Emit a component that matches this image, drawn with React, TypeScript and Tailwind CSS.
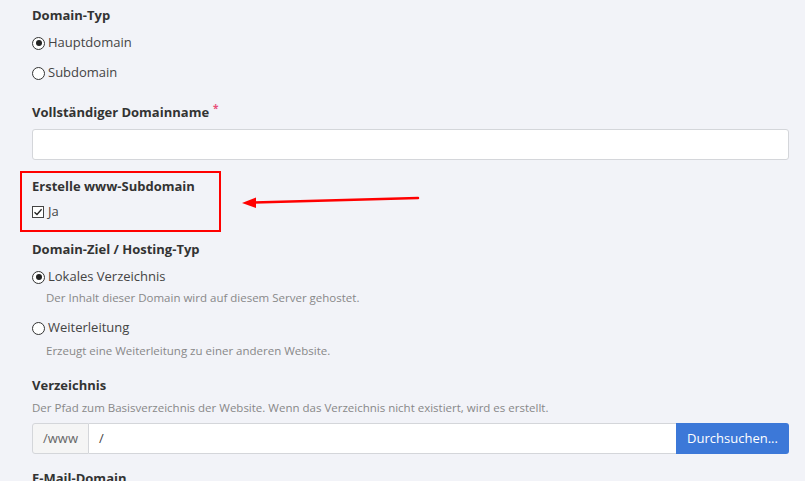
import React from 'react';

const font = { fontFamily: '"Open Sans", "Noto Sans", sans-serif' };

function Radio({ checked, label }: { checked?: boolean; label: string }) {
  return (
    <div className="flex h-[20px] items-center">
      <span className="flex h-[13px] w-[13px] items-center justify-center rounded-full border border-[#333] bg-white">
        {checked && <span className="h-[6px] w-[6px] rounded-full bg-[#222]" />}
      </span>
      <span className="ml-[3px] text-[13px] text-[#444]">{label}</span>
    </div>
  );
}

function Label({ children, className = '' }: { children: React.ReactNode; className?: string }) {
  return <div className={`text-[13px] font-bold leading-[20px] text-[#333] ${className}`}>{children}</div>;
}

function Hint({ children, className = '' }: { children: React.ReactNode; className?: string }) {
  return <div className={`text-[11.5px] leading-[16px] text-[#888] ${className}`}>{children}</div>;
}

export default function App() {
  return (
    <div className="relative h-[481px] w-[805px] overflow-hidden bg-[#f2f3f8]" style={font}>
      <div className="pl-[32px] pr-[16px] pt-[5px]">
        <Label>Domain-Typ</Label>
        <div className="mt-[8px]">
          <Radio checked label="Hauptdomain" />
        </div>
        <div className="mt-[10px]">
          <Radio label="Subdomain" />
        </div>

        <Label className="mt-[19px]">
          Vollständiger Domainname
          <sup className="ml-[4px] text-[10px] text-[#e8507a]">*</sup>
        </Label>
        <div className="mt-[7px] h-[31px] rounded-[3px] border border-[#d4d6da] bg-white" />

        <div className="ml-[-12px] mt-[11px] w-[201px] border-2 border-[#ff0000] pb-[8px] pl-[10px] pt-[3px]">
          <Label>Erstelle www-Subdomain</Label>
          <div className="mt-[6px] flex h-[20px] items-center">
            <span className="flex h-[12px] w-[12px] items-center justify-center border border-[#444] bg-white">
              <svg width="10" height="10" viewBox="0 0 10 10">
                <path d="M1.5 5.2 L4 7.5 L8.6 2.3" fill="none" stroke="#222" strokeWidth="1.3" />
              </svg>
            </span>
            <span className="ml-[4px] text-[13px] text-[#444]">Ja</span>
          </div>
        </div>

        <Label className="mt-[7px]">Domain-Ziel / Hosting-Typ</Label>
        <div className="mt-[8px]">
          <Radio checked label="Lokales Verzeichnis" />
        </div>
        <Hint className="ml-[14px] mt-[3px]">Der Inhalt dieser Domain wird auf diesem Server gehostet.</Hint>
        <div className="mt-[12px]">
          <Radio label="Weiterleitung" />
        </div>
        <Hint className="ml-[14px] mt-[5px]">Erzeugt eine Weiterleitung zu einer anderen Website.</Hint>

        <Label className="mt-[16px]">Verzeichnis</Label>
        <Hint className="mt-[5px]">
          Der Pfad zum Basisverzeichnis der Website. Wenn das Verzeichnis nicht existiert, wird es erstellt.
        </Hint>
        <div className="mt-[7px] flex h-[31px]">
          <div className="flex w-[57px] items-center justify-center rounded-l-[3px] border border-[#d4d6da] bg-[#f5f5f5] text-[13px] text-[#666]">
            /www
          </div>
          <div className="flex flex-1 items-center border-y border-[#d4d6da] bg-white pl-[10px] text-[13px] text-[#444]">
            /
          </div>
          <button className="w-[113px] rounded-r-[3px] bg-[#3c78d8] text-[13px] text-white">Durchsuchen...</button>
        </div>

        <Label className="mt-[14px]">E-Mail-Domain</Label>
      </div>

      <svg className="absolute left-0 top-0" width="805" height="481">
        <line x1="418" y1="198" x2="252" y2="202.5" stroke="#ff0000" strokeWidth="2.5" strokeLinecap="round" />
        <polygon points="242,203 256,197.5 256,208" fill="#ff0000" />
      </svg>
    </div>
  );
}
